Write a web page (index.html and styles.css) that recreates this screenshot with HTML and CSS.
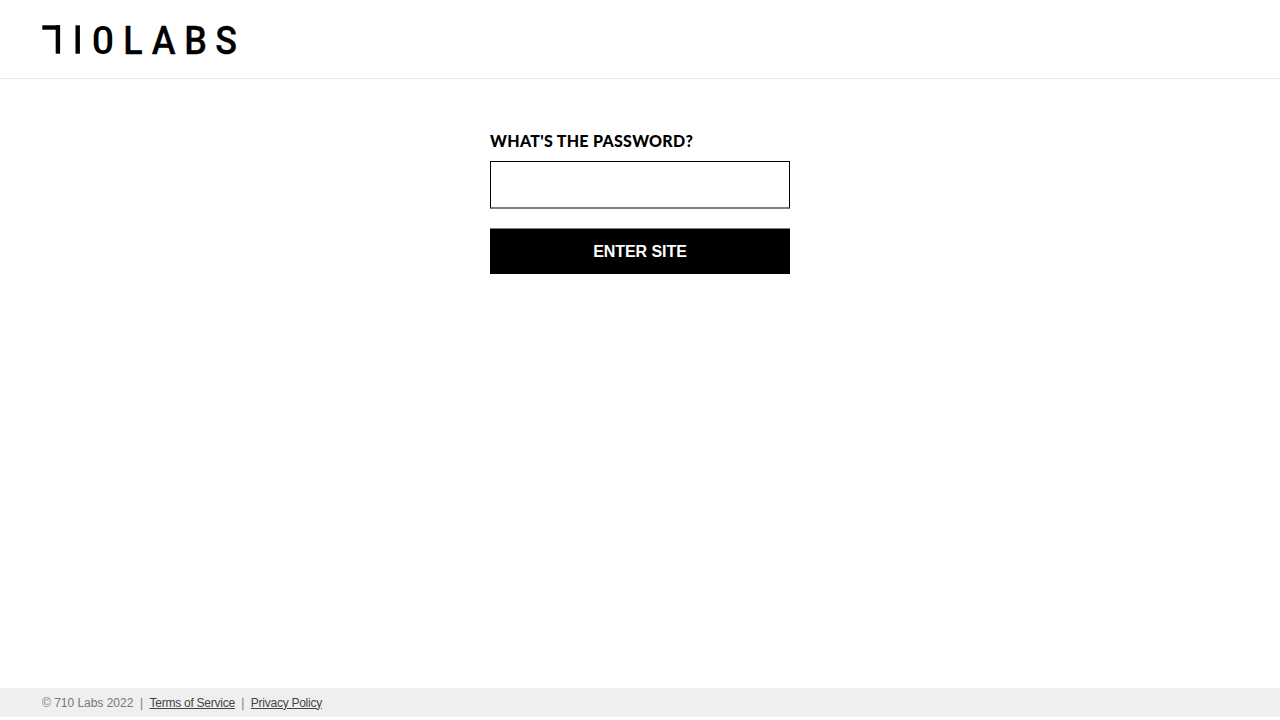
FILE: index.html
```html
<!DOCTYPE html>
<html lang="en">
<head>
<meta charset="utf-8">
<title>710 Labs</title>
<link rel="stylesheet" href="styles.css">
</head>
<body>
<header class="header">
  <svg class="logo" width="200" height="40" viewBox="0 0 200 40" role="img" aria-label="710 Labs">
    <rect x="2.3" y="5.3" width="17.7" height="4.4"/>
    <rect x="15.7" y="5.3" width="4.4" height="28.4"/>
    <rect x="35.5" y="5.3" width="4.4" height="28.4"/>
    <text y="33.5" x="51.7">0</text>
    <text class="labs" y="33.5" x="91.6 122.7 158.4 192.5">LABS</text>
  </svg>
</header>
<main class="main">
  <form class="form">
    <label class="label" for="password">WHAT'S THE PASSWORD?</label>
    <input class="input" id="password" type="password">
    <button class="button" type="button"><span>ENTER SITE</span></button>
  </form>
</main>
<footer class="footer">
  <span class="copy">© 710 Labs 2022</span><span class="bar">|</span><a class="terms" href="#">Terms of Service</a><span class="bar">|</span><a class="privacy" href="#">Privacy Policy</a>
</footer>
</body>
</html>
```
FILE: styles.css
```css
* { box-sizing: border-box; }
body {
  margin: 0;
  height: 720px;
  padding-bottom: 3px;
  display: flex;
  flex-direction: column;
  background: #fff;
  font-family: "Liberation Sans", Arial, sans-serif;
}
.header {
  height: 79px;
  padding: 20px 40px;
  border-bottom: 1px solid #ececec;
}
.logo { display: block; overflow: visible; fill: #000; }
.logo text { font: 500 39.4px Roboto, sans-serif; }
.labs { transform: scaleX(0.91); stroke: #000; stroke-width: 0.3px; }
.main { flex: 1; display: flex; justify-content: center; align-items: flex-start; padding-top: 52px; }
.form { width: 300px; display: flex; flex-direction: column; }
.label {
  height: 30px;
  line-height: 20px;
  font-family: Lato, sans-serif;
  font-size: 16px;
  font-weight: 900;
  letter-spacing: 0.3px;
  white-space: nowrap;
}
.input {
  height: 48px;
  padding: 0 12px;
  border: 1px solid #000;
  border-bottom: 2px solid #808080;
  border-radius: 0;
  background: #fff;
  font-size: 16px;
  outline: none;
}
.button {
  height: 46px;
  margin-top: 19px;
  padding: 0;
  border: 0;
  border-top: 1px solid #7a7d7a;
  background: #000;
  color: #fff;
  font: bold 16px "Liberation Sans", Arial, sans-serif;
  letter-spacing: -0.05px;
}
.footer {
  height: 29px;
  padding: 0 42px;
  display: flex;
  align-items: center;
  background: #efefef;
  color: #777;
  font-size: 12px;
  line-height: 16px;
  white-space: pre;
}
.footer a { color: #444; text-decoration: underline; text-underline-offset: 1px; }
.bar { width: 16px; text-align: center; }
.copy { width: 91.5px; letter-spacing: -0.02px; }
.terms { letter-spacing: -0.25px; }
.privacy { letter-spacing: -0.26px; }
```
